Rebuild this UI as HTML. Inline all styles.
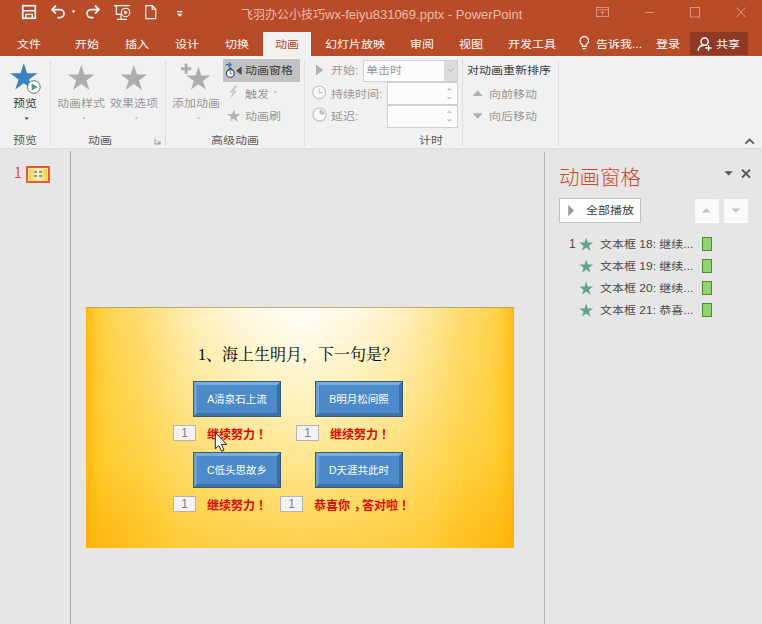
<!DOCTYPE html>
<html lang="zh-CN"><head><meta charset="utf-8"><title>PowerPoint</title>
<style>
*{box-sizing:border-box;margin:0;padding:0}
html,body{width:762px;height:624px;overflow:hidden;background:#e6e6e6}
body{position:relative;font-family:"Liberation Sans","Noto Sans CJK SC",sans-serif;font-size:12px;color:#444}
.a{position:absolute;white-space:nowrap;line-height:1}
#ico{position:absolute;left:0;top:0;width:762px;height:624px;overflow:visible}
#title{left:0;top:0;width:762px;height:56px;background:#b84b28}
#ribbon{left:0;top:56px;width:762px;height:93px;background:#f1f1f1;border-bottom:1px solid #dedede}
.tab,.rl,.gl,.dk,.row{transform:scaleY(.88);transform-origin:0 96%}
.tab{color:#fff;font-size:12px;top:38px}
.dk{font-size:12px;color:#3a3a3a}
.rl{font-size:12px;color:#989898}
.gl{font-size:12px;color:#5a5a5a;top:134px}
.sep{width:1px;background:#e0e0e4;top:60px;height:86px}
.row{font-size:12px;color:#484848;left:600px}
.bar{left:702px;width:10px;height:14px;background:#92d36e;border:1px solid #4e8a3a}
.btn{width:88px;height:36px;background:#4c8aca;border:4px solid;border-color:#7aaee0 #3a6ea6 #3d72aa #68a2da;outline:1px solid #35597c;outline-offset:-1px;color:#fff;font-size:10.5px;text-align:center;line-height:28px}
.nb{width:23px;height:16px;background:#f3f3f6;border:1px solid #b4b4b4;color:#808080;font-size:12px;text-align:center;line-height:14px}
.red{font-size:12px;font-weight:bold;color:#e40500}
.pu{position:relative;left:3px}
</style></head><body>
<!-- title & tabs -->
<div class="a" id="title"></div>
<div class="a" style="left:241px;top:8px;font-size:12px;color:#e9bba9">飞羽办公小技巧<span style="font-size:13px">wx-feiyu831069.pptx - PowerPoint</span></div>
<div class="a tab" style="left:17px">文件</div>
<div class="a tab" style="left:75px">开始</div>
<div class="a tab" style="left:125px">插入</div>
<div class="a tab" style="left:175px">设计</div>
<div class="a tab" style="left:225px">切换</div>
<div class="a" style="left:263px;top:32px;width:48px;height:25px;background:#f1f1f1"></div>
<div class="a tab" style="left:275px;color:#b7472a">动画</div>
<div class="a tab" style="left:325px">幻灯片放映</div>
<div class="a tab" style="left:410px">审阅</div>
<div class="a tab" style="left:459px">视图</div>
<div class="a tab" style="left:508px">开发工具</div>
<div class="a tab" style="left:596px">告诉我...</div>
<div class="a tab" style="left:656px">登录</div>
<div class="a" style="left:690px;top:32px;width:58px;height:23px;background:#8e3a24"></div>
<div class="a tab" style="left:716px">共享</div>
<!-- ribbon -->
<div class="a" id="ribbon"></div>
<div class="a dk" style="left:13px;top:97px">预览</div>
<div class="a gl" style="left:13px">预览</div>
<div class="a sep" style="left:50px"></div>
<div class="a rl" style="left:57px;top:97px">动画样式</div>
<div class="a rl" style="left:110px;top:97px">效果选项</div>
<div class="a gl" style="left:88px">动画</div>
<div class="a sep" style="left:165px"></div>
<div class="a rl" style="left:172px;top:97px">添加动画</div>
<div class="a" style="left:223px;top:59px;width:77px;height:23px;background:#c2c2c2"></div>
<div class="a dk" style="left:245px;top:64px">动画窗格</div>
<div class="a rl" style="left:245px;top:88px">触发</div>
<div class="a rl" style="left:245px;top:110px">动画刷</div>
<div class="a gl" style="left:211px">高级动画</div>
<div class="a sep" style="left:304px"></div>
<div class="a rl" style="left:331px;top:64px">开始:</div>
<div class="a rl" style="left:331px;top:88px">持续时间:</div>
<div class="a rl" style="left:331px;top:110px">延迟:</div>
<div class="a" style="left:363px;top:60px;width:95px;height:22px;background:#fcfcfc;border:1px solid #d0d0d0"></div>
<div class="a" style="left:444px;top:61px;width:13px;height:20px;background:#dcdcdc"></div>
<div class="a rl" style="left:366px;top:64px">单击时</div>
<div class="a" style="left:387px;top:82px;width:71px;height:23px;background:#fcfcfc;border:1px solid #d0d0d0"></div>
<div class="a" style="left:387px;top:105px;width:71px;height:23px;background:#fcfcfc;border:1px solid #d0d0d0"></div>
<div class="a gl" style="left:419px">计时</div>
<div class="a sep" style="left:462px"></div>
<div class="a dk" style="left:467px;top:64px">对动画重新排序</div>
<div class="a rl" style="left:489px;top:88px">向前移动</div>
<div class="a rl" style="left:489px;top:110px">向后移动</div>
<div class="a sep" style="left:558px"></div>
<!-- left panel -->
<div class="a" style="left:70px;top:151px;width:1px;height:473px;background:#a8a8a8"></div>
<div class="a" style="left:14px;top:165px;font-size:14px;color:#d0563c;font-family:'Noto Sans CJK SC',sans-serif">1</div>
<div class="a" style="left:26px;top:166px;width:24px;height:17px;border:2.5px solid #e85c30;background:linear-gradient(90deg,#ffc926,#fff6c0 50%,#ffc926);box-shadow:inset 0 0 0 1px #ffe9a0"></div>
<div class="a" style="left:34px;top:171px;width:3px;height:2px;background:#6f9cc8;box-shadow:5px 0 0 #6f9cc8,0 4px 0 #6f9cc8,5px 4px 0 #6f9cc8"></div>
<!-- right pane -->
<div class="a" style="left:544px;top:152px;width:1px;height:472px;background:#b4b4b4"></div>
<div class="a" style="left:559px;top:168px;font-size:20.5px;font-weight:300;color:#cf4a22">动画窗格</div>
<div class="a" style="left:559px;top:198px;width:82px;height:25px;background:#fdfdfd;border:1px solid #c2c2c2"></div>
<div class="a dk" style="left:586px;top:204px">全部播放</div>
<div class="a" style="left:695px;top:199px;width:24px;height:24px;background:#fafafa"></div>
<div class="a" style="left:724px;top:199px;width:24px;height:24px;background:#fafafa"></div>
<div class="a" style="left:569px;top:238px;font-size:12px;color:#444">1</div>
<div class="a row" style="top:238px">文本框 18: 继续...</div>
<div class="a bar" style="top:237px"></div>
<div class="a row" style="top:260px">文本框 19: 继续...</div>
<div class="a bar" style="top:259px"></div>
<div class="a row" style="top:282px">文本框 20: 继续...</div>
<div class="a bar" style="top:281px"></div>
<div class="a row" style="top:304px">文本框 21: 恭喜...</div>
<div class="a bar" style="top:303px"></div>
<!-- slide -->
<div class="a" id="slide" style="left:86px;top:307px;width:428px;height:241px;border-top:1px solid rgba(150,150,140,.6);background:radial-gradient(circle 95px at 0 100%,rgba(255,168,0,.45),rgba(255,168,0,0)),radial-gradient(circle 95px at 100% 100%,rgba(255,168,0,.45),rgba(255,168,0,0)),linear-gradient(90deg,rgba(255,184,12,0.97) 0%,rgba(255,196,20,0.82) 3%,rgba(255,196,20,0.69) 7%,rgba(255,196,20,0.61) 12%,rgba(255,196,20,0.42) 19%,rgba(255,196,20,0.25) 26%,rgba(255,196,20,0.09) 38%,rgba(255,196,20,0) 50%,rgba(255,196,20,0.09) 62%,rgba(255,196,20,0.25) 74%,rgba(255,196,20,0.42) 81%,rgba(255,196,20,0.61) 88%,rgba(255,196,20,0.69) 93%,rgba(255,196,20,0.82) 97%,rgba(255,184,12,0.97) 100%),linear-gradient(180deg,#fffffa 0,#fff3c0 38.6%,#ffe690 63.5%,#ffd860 88.4%,#ffd050 100%)"></div>
<div class="a" style="left:198px;top:347px;font-size:16px;color:#000;font-family:'Liberation Serif','Noto Serif CJK SC',serif">1、海上生明月，下一句是？</div>
<div class="a btn" style="left:193px;top:381px">A清泉石上流</div>
<div class="a btn" style="left:315px;top:381px">B明月松间照</div>
<div class="a btn" style="left:193px;top:452px">C低头思故乡</div>
<div class="a btn" style="left:315px;top:452px">D天涯共此时</div>
<div class="a nb" style="left:173px;top:425px">1</div>
<div class="a nb" style="left:296px;top:425px">1</div>
<div class="a nb" style="left:173px;top:496px">1</div>
<div class="a nb" style="left:280px;top:496px">1</div>
<div class="a red" style="left:207px;top:429px">继续努力<span class="pu">！</span></div>
<div class="a red" style="left:330px;top:429px">继续努力<span class="pu">！</span></div>
<div class="a red" style="left:207px;top:500px">继续努力<span class="pu">！</span></div>
<div class="a red" style="left:314px;top:500px">恭喜你<span class="pu" style="left:4px">，</span>答对啦<span class="pu">！</span></div>
<svg id="ico" viewBox="0 0 762 624">
<g fill="none" stroke="#fff" stroke-width="1.6"><rect x="22.7" y="5.7" width="12.6" height="12.6"/><path d="M22.6 10.8h12.8M26 18.4v-4h6.2v4" stroke-width="1.4"/></g>
<g fill="none" stroke="#fff" stroke-width="1.7"><path d="M52 9.6h8a4 4 0 0 1 0 8h-2.6M56 5.6l-4 4 4 4"/><path d="M99 9.6h-8a4 4 0 0 0 0 8h2.6M95 5.6l4 4-4 4"/></g>
<path d="M71.3 10.6h4.4l-2.2 2.3z" fill="#fff"/>
<g fill="none" stroke="#fff" stroke-width="1.1"><path d="M114 5.6h16M116.3 6v8.4h5M121 14.4v4.6M117 19.4h10"/><circle cx="125.6" cy="12.4" r="4.2"/></g><path d="M124.2 10.2l3.6 2.2-3.6 2.2z" fill="#fff"/>
<path d="M145.8 5.6h6.4l3.6 3.6v9.4h-10zM152.2 5.6v3.6h3.6" fill="none" stroke="#fff" stroke-width="1.1"/>
<path d="M177 11h5.4v1.2H177zM177 13.8h5.4l-2.7 3z" fill="#fff"/>
<g fill="none" stroke="#dc927b" stroke-width="1"><rect x="596.5" y="7.5" width="12" height="9"/><path d="M596.5 9.8h12M602.5 15v-3.6M600.8 13l1.7-1.7 1.7 1.7M645 12.5h9"/><rect x="690.5" y="7.5" width="9" height="9.5"/><path d="M736.5 7.5l9 9.5M745.5 7.5l-9 9.5"/></g>
<g fill="none" stroke="#fff" stroke-width="1.2"><path d="M582.4 46.4v-1.6c-1.5-1-2.4-2.2-2.4-3.8a4.3 4.3 0 0 1 8.6 0c0 1.6-.9 2.8-2.4 3.8v1.6zM582.6 48.6h3.4"/></g>
<g fill="none" stroke="#fff" stroke-width="1.5"><circle cx="704.6" cy="41.6" r="3.6"/><path d="M698 50.6c.6-3.4 2.6-5.2 5.4-5.2"/><path d="M705.4 48h6.2M708.5 44.9v6.2" stroke-width="1.3"/></g>
<polygon points="23.8,63.3 27.1,73.3 37.6,73.3 29.1,79.5 32.3,89.5 23.8,83.3 15.3,89.5 18.5,79.5 10.0,73.3 20.5,73.3" fill="#3b82c4"/>
<circle cx="33.9" cy="87" r="6.3" fill="#fff" stroke="#6b6b6b" stroke-width="1"/><path d="M31.6 83.2l6 3.8-6 3.8z" fill="#4aa56b"/>
<path d="M24.4 117.4h4.6l-2.3 2.4z" fill="#444"/>
<polygon points="81.3,64.8 84.4,74.5 94.6,74.5 86.4,80.5 89.5,90.1 81.3,84.1 73.1,90.1 76.2,80.5 68.0,74.5 78.2,74.5" fill="#adadad"/>
<polygon points="133.8,64.8 136.9,74.5 147.1,74.5 138.9,80.5 142.0,90.1 133.8,84.1 125.6,90.1 128.7,80.5 120.5,74.5 130.7,74.5" fill="#adadad"/>
<path d="M82.1 117.4h4l-2 2.2zM134.6 117.4h4l-2 2.2zM196.4 117.4h4l-2 2.2z" fill="#bdbdbd"/>
<path d="M155 138.5v5.5h5.5M157 140.5l3 3M160 141.2v2.3h-2.3" fill="none" stroke="#9a9a9a" stroke-width="1"/>
<polygon points="198.4,66.8 201.2,75.5 210.4,75.5 203.0,80.9 205.8,89.6 198.4,84.2 191.0,89.6 193.8,80.9 186.4,75.5 195.6,75.5" fill="#adadad"/>
<path d="M184.6 63.6h3v3.6h3.6v3h-3.6v3.6h-3v-3.6H181v-3h3.6z" fill="#adadad"/>
<path d="M226 64.8h4.6M228.6 62.6l2.4 2.2-2.4 2.2" fill="none" stroke="#2b7cd3" stroke-width="1.4"/>
<circle cx="230.3" cy="73.4" r="3.9" fill="#fff" stroke="#3a4a5a" stroke-width="1.3"/><path d="M230.3 71v2.6h2" fill="none" stroke="#2b7cd3" stroke-width="1"/><path d="M229 68.2h2.6" stroke="#3a4a5a" stroke-width="1.4"/>
<path d="M241.6 66.6v8.4l-5.6-4.2z" fill="#4a4a4a"/>
<path d="M235 85.6l-5.4 7h3.2l-2.6 5.8 7-7.6h-3.4l3.4-5.2z" fill="#c9c9c9"/>
<path d="M273.4 91.4h4l-2 2.2z" fill="#bdbdbd"/>
<polygon points="233.8,109.0 235.4,114.0 240.6,114.0 236.4,117.0 238.0,122.0 233.8,119.0 229.6,122.0 231.2,117.0 227.0,114.0 232.2,114.0" fill="#b5b5b5"/>
<path d="M232 118.5l3.5 3.5-2 1-2.5-2.5z" fill="#e8e8e8"/>
<path d="M316 64.8l7.4 5.2-7.4 5.2z" fill="#b0b0b0"/>
<g fill="#fafafa" stroke="#c4c4c4" stroke-width="1.2"><circle cx="319.2" cy="92.4" r="6.4"/><circle cx="319.6" cy="114.6" r="6.6"/></g>
<path d="M319.2 88.4v4.2h3.4" fill="none" stroke="#c4c4c4" stroke-width="1.1"/>
<path d="M319.6 114.6v-5a5 5 0 0 1 5 5z" fill="#c9c0c4"/>
<path d="M447.8 68.8l2.7 2.7 2.7-2.7" fill="none" stroke="#b0b0b0" stroke-width="1"/>
<path d="M446.8 90.2l2.6-2.6 2.6 2.6zM446.8 97l2.6 2.4 2.6-2.4zM446.8 113l2.6-2.6 2.6 2.6zM446.8 119.6l2.6 2.4 2.6-2.4z" fill="#c6c6c6"/>
<path d="M472.6 96l5-5.6 5 5.6zM472.6 113.2l5 5.6 5-5.6z" fill="#b0b0b0"/>
<path d="M745.4 143.6l4.2-4.2 4.2 4.2" fill="none" stroke="#555" stroke-width="1.7"/>
<path d="M724.4 171.2h8.4l-4.2 4.4z" fill="#555"/>
<path d="M742 169.6l8 8M750 169.6l-8 8" stroke="#555" stroke-width="2"/>
<path d="M568.6 205.6l5 5-5 5z" fill="#9a9a9a" stroke="#8a8a8a" stroke-width="0.6"/>
<path d="M702 212.6l4.4-4.4 4.4 4.4z" fill="#c2c2c2"/><path d="M731.4 208.4l4.4 4.4 4.4-4.4z" fill="#c2c2c2"/>
<polygon points="586.2,237.5 587.8,242.5 593.1,242.5 588.9,245.7 590.5,250.7 586.2,247.6 581.9,250.7 583.5,245.7 579.3,242.5 584.6,242.5" fill="#5fa391"/>
<polygon points="586.2,259.5 587.8,264.5 593.1,264.5 588.9,267.7 590.5,272.7 586.2,269.6 581.9,272.7 583.5,267.7 579.3,264.5 584.6,264.5" fill="#5fa391"/>
<polygon points="586.2,281.5 587.8,286.5 593.1,286.5 588.9,289.7 590.5,294.7 586.2,291.6 581.9,294.7 583.5,289.7 579.3,286.5 584.6,286.5" fill="#5fa391"/>
<polygon points="586.2,303.5 587.8,308.5 593.1,308.5 588.9,311.7 590.5,316.7 586.2,313.6 581.9,316.7 583.5,311.7 579.3,308.5 584.6,308.5" fill="#5fa391"/>
<path d="M215.3 432.4v16.4l3.6-3.3 2.7 5.8 2.4-1.1-2.6-5.8h5.2z" fill="#fff" stroke="#222" stroke-width="1" stroke-linejoin="round"/>
</svg>
</body></html>
